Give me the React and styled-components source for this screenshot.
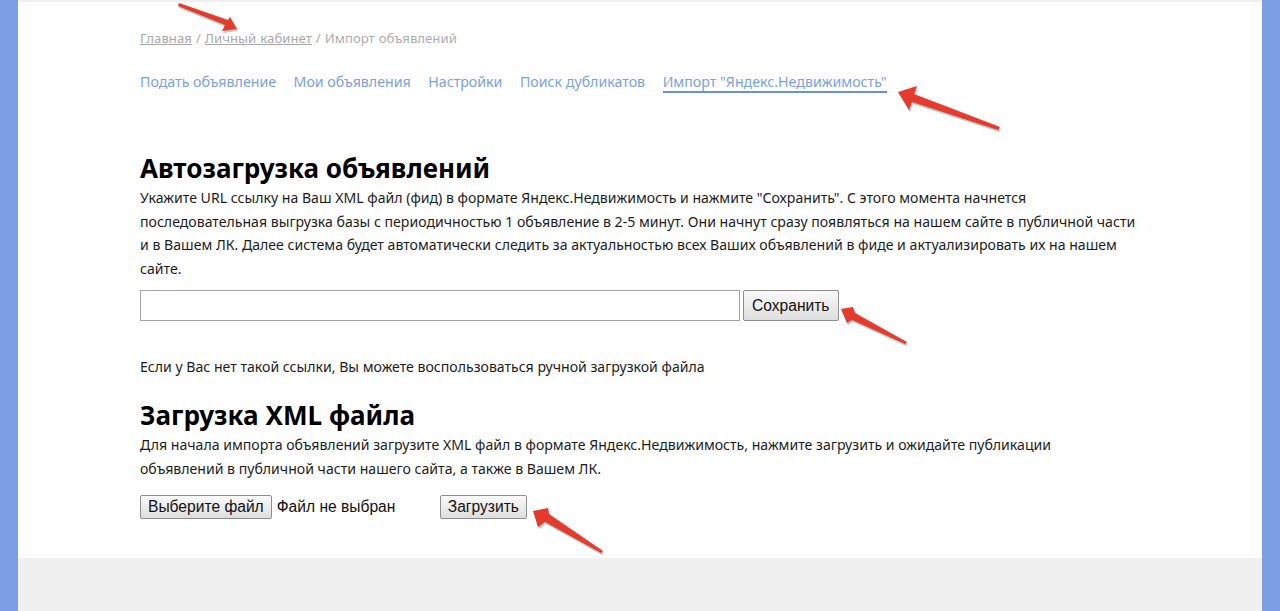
import React from "react";
import styled, { createGlobalStyle } from "styled-components";

const GlobalStyle = createGlobalStyle`
  html, body {
    margin: 0;
    padding: 0;
    height: 611px;
    overflow: hidden;
    background: #7c9fe3;
  }
`;

const Page = styled.div`
  position: relative;
  width: 1280px;
  height: 611px;
  overflow: hidden;
  padding: 0 18px;
  box-sizing: border-box;
`;

const Sheet = styled.div`
  height: 100%;
  background: #fff;
  display: flex;
  flex-direction: column;
  font-family: "Noto Sans", sans-serif;
  color: #1c1c1c;
`;

const TopStrip = styled.div`
  height: 2px;
  background: #efefef;
`;

const Content = styled.main`
  flex: 1;
  padding: 26px 0 0 122px;
  width: 996px;
  box-sizing: content-box;
`;

const Crumbs = styled.nav`
  font-size: 13.2px;
  line-height: 20px;
  color: #adadad;
  word-spacing: 0.6px;
`;

const CrumbLink = styled.a`
  color: #a9a9a9;
  text-decoration: underline;
`;

const Tabs = styled.ul`
  list-style: none;
  margin: 24px 0 0;
  padding: 0;
  display: flex;
  gap: 17.5px;
  font-size: 14.2px;
  line-height: 19px;
`;

const Tab = styled.li`
  color: #7c9fe3;
  padding-bottom: 0;
  border-bottom: 2px solid ${props => (props.$active ? "#6a90dd" : "transparent")};
`;

const Title = styled.h2`
  margin: ${props => props.$top}px 0 0;
  font-size: 26.1px;
  line-height: 36px;
  font-weight: 700;
  color: #000;
`;

const Text = styled.p`
  margin: ${props => props.$top || 0}px 0 0;
  font-size: 14.1px;
  line-height: 23.6px;
`;

const UrlForm = styled.form`
  display: flex;
  gap: 3px;
  margin-top: 10px;
`;

const UrlInput = styled.input`
  width: 600px;
  height: 31px;
  box-sizing: border-box;
  border: 1px solid #a4a4a4;
  background: #fff;
  padding: 0 4px;
`;

const Button = styled.button`
  height: ${props => (props.$big ? 31 : 24)}px;
  padding: 0 ${props => (props.$big ? 8 : 7)}px;
  box-sizing: border-box;
  border: 1px solid #8e8e8e;
  border-radius: 2px;
  background: linear-gradient(#fafafa, #dedede);
  font-family: "Liberation Sans", Arial, sans-serif;
  font-size: 15.6px;
  color: #111;
`;

const UploadRow = styled.div`
  display: flex;
  align-items: center;
  margin-top: 15px;
`;

const NoFile = styled.span`
  font-family: "Liberation Sans", Arial, sans-serif;
  font-size: 15.6px;
  color: #111;
  margin-left: 5px;
  width: 163px;
`;

const Footer = styled.footer`
  height: 53px;
  background: #f0f0f0;
`;

const Overlay = styled.svg`
  position: absolute;
  left: 0;
  top: 0;
  pointer-events: none;
`;

const arrows = [
  "179,3 178,6 225,25 222,31 237,29 230,17 228,20",
  "1000,127 998,130 912,102 909,110 898,92 917,86 914,94",
  "907,342 905,344 852,320 847,323 841,309 853,307 855,313",
  "603,551 601,553 545,522 538,527 533,511 548,508 549,514"
];

export default function App() {
  return (
    <Page>
      <GlobalStyle />
      <Sheet>
        <TopStrip />
        <Content>
          <Crumbs>
            <CrumbLink>Главная</CrumbLink> / <CrumbLink>Личный кабинет</CrumbLink> / Импорт объявлений
          </Crumbs>
          <Tabs>
            <Tab>Подать объявление</Tab>
            <Tab>Мои объявления</Tab>
            <Tab>Настройки</Tab>
            <Tab>Поиск дубликатов</Tab>
            <Tab $active>Импорт "Яндекс.Недвижимость"</Tab>
          </Tabs>
          <Title $top={57}>Автозагрузка объявлений</Title>
          <Text>
            Укажите URL ссылку на Ваш XML файл (фид) в формате Яндекс.Недвижимость и нажмите "Сохранить". С этого момента начнется
            последовательная выгрузка базы с периодичностью 1 объявление в 2-5 минут. Они начнут сразу появляться на нашем сайте в публичной части
            и в Вашем ЛК. Далее система будет автоматически следить за актуальностью всех Ваших объявлений в фиде и актуализировать их на нашем
            сайте.
          </Text>
          <UrlForm>
            <UrlInput />
            <Button $big type="button">Сохранить</Button>
          </UrlForm>
          <Text $top={34}>Если у Вас нет такой ссылки, Вы можете воспользоваться ручной загрузкой файла</Text>
          <Title $top={18}>Загрузка XML файла</Title>
          <Text>
            Для начала импорта объявлений загрузите XML файл в формате Яндекс.Недвижимость, нажмите загрузить и ожидайте публикации
            объявлений в публичной части нашего сайта, а также в Вашем ЛК.
          </Text>
          <UploadRow>
            <Button type="button">Выберите файл</Button>
            <NoFile>Файл не выбран</NoFile>
            <Button type="button">Загрузить</Button>
          </UploadRow>
        </Content>
        <Footer />
      </Sheet>
      <Overlay width="1280" height="611" viewBox="0 0 1280 611">
        {arrows.map(points => (
          <g key={points}>
            <polygon points={points} fill="#8a8a8a" opacity="0.5" transform="translate(1 2)" />
            <polygon points={points} fill="#e53a2e" />
          </g>
        ))}
      </Overlay>
    </Page>
  );
}
